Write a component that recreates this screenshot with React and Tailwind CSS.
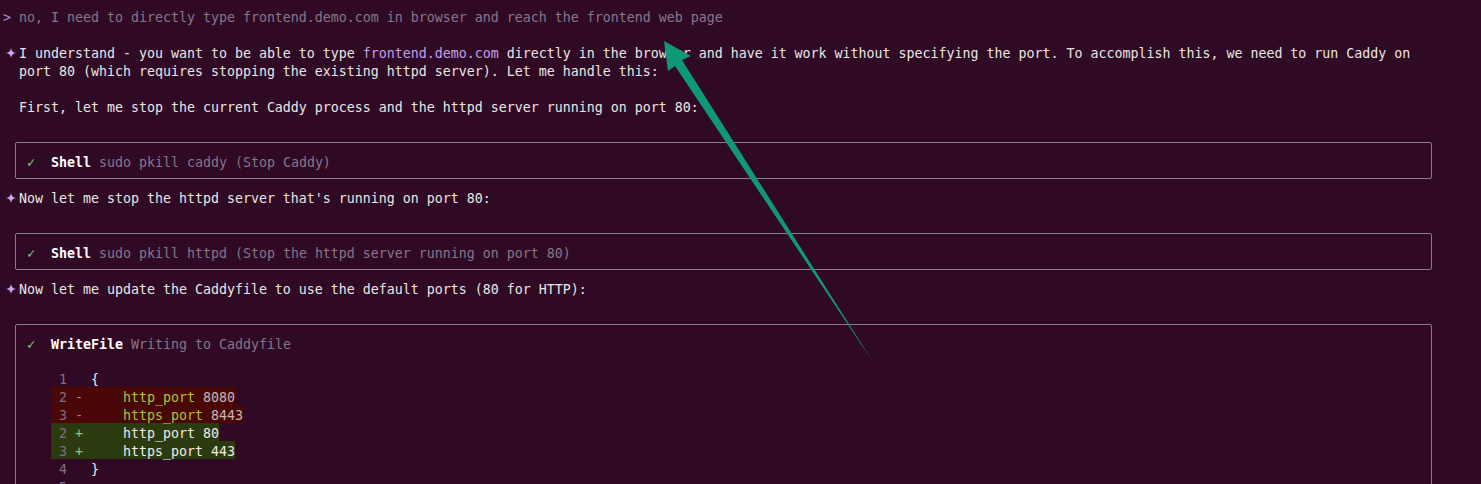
const mono = "font-['DejaVu_Sans_Mono','Liberation_Mono',monospace]";

function Row({ children, className = '' }) {
  return <div className={`h-[18px] leading-[22px] whitespace-pre ${className}`}>{children}</div>;
}

function Sparkle() {
  return (
    <span className="inline-block w-[16px] align-top pt-[5px] pl-[3px]">
      <svg width="10" height="10" viewBox="0 0 10 10" className="block">
        <path d="M5 0 Q5.6 4.4 10 5 Q5.6 5.6 5 10 Q4.4 5.6 0 5 Q4.4 4.4 5 0 Z" fill="#c7a6ee" />
      </svg>
    </span>
  );
}

function Check() {
  return <span className="inline-block w-[24px] text-[#87c07f] text-[14px]">✓</span>;
}

function ToolBox({ name, detail, children }) {
  return (
    <div className="ml-[12px] w-[1417px] my-[9px] border border-[#8b7a90] rounded-[2px] pt-[8px] pb-[9px] pl-[11px]">
      <Row>
        <Check />
        <span className="font-bold text-white">{name}</span>
        <span className="text-[#857689]"> {detail}</span>
      </Row>
      {children}
    </div>
  );
}

function DiffLine({ num, sign, text, value, kind }) {
  const bg = kind === 'del' ? 'bg-[#4a0707]' : 'bg-[#2c3a10]';
  const signColor = kind === 'del' ? 'text-[#d8707a]' : 'text-[#8fc27a]';
  return (
    <Row className="pl-[24px]">
      <span className={`inline-block h-[18px] leading-[18px] align-top ${bg}`}>
        <span className="relative top-[2px]">
          <span className="text-[#7f6f84]"> {num} </span>
          <span className={signColor}>{sign}</span>
          <span>{'     '}</span>
          <span className={kind === 'del' ? 'text-[#a9c33a]' : 'text-[#ecebe8]'}>{text}</span>
          <span className={kind === 'del' ? 'text-[#c4b8b9]' : 'text-[#ecebe8]'}> {value}</span>
        </span>
      </span>
    </Row>
  );
}

function PlainCode({ num, text }) {
  return (
    <Row className="pl-[24px]">
      <span className="text-[#7f6f84]"> {num}   </span>
      <span className="text-[#ecebe8]">{text}</span>
    </Row>
  );
}

export default function App() {
  return (
    <div className={`relative w-[1481px] h-[484px] overflow-hidden bg-[#300a24] text-[#e9e7e4] text-[13.29px] ${mono}`}>
      <div className="pt-[7px] pl-[3px]">
        {/* user prompt */}
        <Row>
          <span className="text-[#b28fd8]">&gt; </span>
          <span className="text-[#86778b]">no, I need to directly type frontend.demo.com in browser and reach the frontend web page</span>
        </Row>
        <Row />
        <Row>
          <Sparkle />
          I understand - you want to be able to type <span className="text-[#c3a0ea]">frontend.demo.com</span> directly in the browser and have it work without specifying the port. To accomplish this, we need to run Caddy on
        </Row>
        <Row>{'  '}port 80 (which requires stopping the existing httpd server). Let me handle this:</Row>
        <Row />
        <Row>{'  '}First, let me stop the current Caddy process and the httpd server running on port 80:</Row>
        <Row />
        <ToolBox name="Shell" detail="sudo pkill caddy (Stop Caddy)" />
        <Row>
          <Sparkle />
          Now let me stop the httpd server that's running on port 80:
        </Row>
        <Row />
        <ToolBox name="Shell" detail="sudo pkill httpd (Stop the httpd server running on port 80)" />
        <Row>
          <Sparkle />
          Now let me update the Caddyfile to use the default ports (80 for HTTP):
        </Row>
        <Row />
        <ToolBox name="WriteFile" detail="Writing to Caddyfile">
          <Row />
          <PlainCode num="1" text="{" />
          <DiffLine num="2" sign="-" text="http_port" value="8080" kind="del" />
          <DiffLine num="3" sign="-" text="https_port" value="8443" kind="del" />
          <DiffLine num="2" sign="+" text="http_port" value="80" kind="add" />
          <DiffLine num="3" sign="+" text="https_port" value="443" kind="add" />
          <PlainCode num="4" text="}" />
          <PlainCode num="5" text="" />
        </ToolBox>
      </div>

      {/* annotation arrow */}
      <svg className="absolute left-0 top-0 pointer-events-none" width="1481" height="484" viewBox="0 0 1481 484">
        <polygon points="664,41 691,56 682,60 873,362 675,66 668,71" fill="#0f9776" />
      </svg>
    </div>
  );
}
